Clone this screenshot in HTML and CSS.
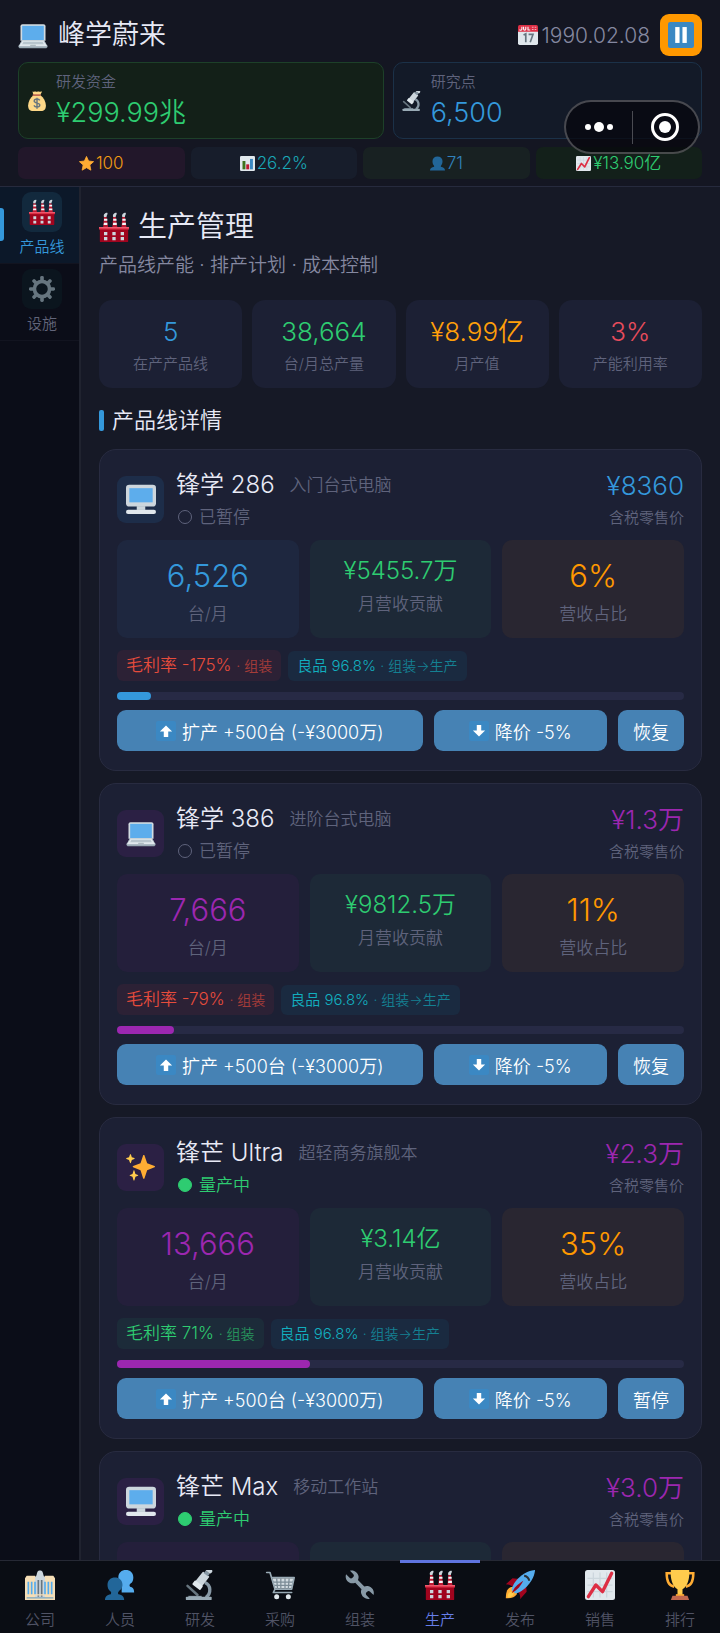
FILE: index.html
```
<!DOCTYPE html>
<html lang="zh-CN">
<head>
    <meta charset="UTF-8">
    <meta name="viewport" content="width=device-width, initial-scale=1.0">
    <title>峰学蔚来</title>
    <link rel="stylesheet" href="styles.css">
</head>
<body>
    <!-- icon sprite -->
    <svg class="sprite" aria-hidden="true">
        <symbol id="i-laptop" viewBox="0 0 36 36">
            <path fill="#ccd6dd" d="M34 29.100c0 1.200-1 1.900-2 1.900H4c-1 0-2-.700-2-1.900L5 24h26z"/>
            <path fill="#9aaab4" d="M.700 32.500c-.600-1.200 0-2 .900-2.500L5 24h26l3.500 6c.900.500 1.400 1.300.800 2.500-.300.600-1 1.500-1.800 1.500h-31c-.800 0-1.500-.900-1.800-1.500z"/>
            <path fill="#e1e8ed" d="M1 31.500L5.500 25h25l4.500 6.500z"/>
            <path fill="#b8c5cd" d="M6.500 26h23l1.500 3H5z"/>
            <path fill="#aebbc1" d="M15 29.800h6l.700 1.700h-7.400z"/>
            <path fill="#d2dbe1" d="M3 7.500C3 6 4 5 5.500 5h25C32 5 33 6 33 7.500V25H3z"/>
            <path fill="#5dadec" d="M5 7h26v17H5z"/>
        </symbol>
        <symbol id="i-desktop" viewBox="0 0 36 36">
            <rect fill="#99aab5" x="13" y="25" width="10" height="7"/>
            <rect fill="#ccd6dd" y="1" width="36" height="26" rx="4"/>
            <path fill="#5dadec" d="M4 5h28v17H4z"/>
            <rect fill="#e1e8ed" y="31" width="36" height="5" rx="2.500"/>
            <path fill="#ccd6dd" d="M13 27h10v4H13z"/>
        </symbol>
        <symbol id="i-sparkles" viewBox="0 0 36 36">
            <path fill="#ffac33" d="M34.300 16.900l-8.900-3.300L22.100 4c-.100-.600-1.300-.600-1.500 0l-3.200 9.600-8.900 3.300c-.600.200-.600 1.300 0 1.500l8.900 3.400 3.200 9.900c.200.600 1.400.600 1.500 0l3.300-9.900 8.900-3.400c.600-.200.600-1.300 0-1.500z"/>
            <path fill="#ffcc4d" d="M14.300 27.500l-3-1.100-1.200-4c-.100-.500-1-.500-1.100 0l-1.200 4-3 1.100c-.500.200-.500.900 0 1.100l3 1.200 1.200 4c.100.500 1 .500 1.100 0l1.200-4 3-1.200c.500-.200.500-.900 0-1.100zM10 7.300L7 6.200 5.900 3c-.100-.500-1-.500-1.100 0L3.600 6.200l-3 1.100c-.500.200-.500.900 0 1.100l3 1.200L4.800 13c.100.500 1 .500 1.100 0L7 9.600l3-1.200c.500-.200.500-.900 0-1.100z"/>
        </symbol>
        <symbol id="i-factory" viewBox="0 0 36 36">
            <path fill="#be1931" d="M5 18l1-12h3l2 12zM16 18l1-12h3l2 12zM27 18l1-12h3l2 12z"/>
            <path fill="#f4f7f9" d="M6 8h4v2.500H6zM6 13h4v2.500H5.500zM17 8h4v2.500h-4zM17 13h4.300v2.500h-4.600zM28 8h4v2.500h-4zM28 13h4.300v2.500h-4.600z"/>
            <path fill="#ccd6dd" d="M6 6C5 3 7 1 10 1c1 2-1 3-1 5zM17 6c-1-3 1-5 4-5 1 2-1 3-1 5zM28 6c-1-3 1-5 4-5 1 2-1 3-1 5z"/>
            <path fill="#a0041e" d="M1 19h34v16a1 1 0 0 1-1 1H2a1 1 0 0 1-1-1z"/>
            <rect fill="#dd2e44" y="18" width="36" height="3"/>
            <path fill="#ea596e" d="M0 18h36v1.500H0z"/>
            <path fill="#ccd6dd" d="M6 24h4v4H6zM16 24h4v4h-4zM26 24h4v4h-4zM6 30h4v4H6zM16 30h4v4h-4zM26 30h4v4h-4z"/>
        </symbol>
        <symbol id="i-gear" viewBox="0 0 36 36">
            <g fill="#66757f">
                <g id="teeth">
                    <rect x="15.500" y="0" width="5" height="36" rx="2"/>
                    <rect x="0" y="15.500" width="36" height="5" rx="2"/>
                </g>
                <use href="#teeth" transform="rotate(45 18 18)"/>
                <circle cx="18" cy="18" r="13"/>
            </g>
            <circle class="gear-hole" cx="18" cy="18" r="8"/>
        </symbol>
        <symbol id="i-money" viewBox="0 0 36 36">
            <path fill="#fdd888" d="M12 7C6 12 2 19 2 26c0 7 3 10 9 10h14c6 0 9-3 9-10 0-7-4-14-10-19z"/>
            <path fill="#fdd888" d="M10 1c2 1 3-1 5 0s4-1 6 0 4-1 6 0c-1 3-2 4-3 6H12c-1-2-2-4-2-6z"/>
            <rect fill="#bf6952" x="10" y="6" width="15" height="3" rx="1.500"/>
            <path fill="none" stroke="#67757f" stroke-width="2.600" d="M23 17c-1-2-3-2.500-5-2.500-3 0-5 1.300-5 3.700C13 23 23 20.500 23 25.300c0 2.500-2.500 3.700-5 3.700-2.500 0-4.500-1-5.500-3M18 12v20"/>
        </symbol>
        <symbol id="i-microscope" viewBox="0 0 36 36">
            <path fill="none" stroke="#67757f" stroke-width="3" stroke-linecap="round" d="M3 19l12 11"/>
            <path fill="none" stroke="#8899a6" stroke-width="4" d="M24 15c7 3 8 13 1 18"/>
            <path fill="#8899a6" d="M4 31h16v3H4z"/>
            <rect fill="#99aab5" x="1" y="32" width="31" height="4" rx="1"/>
            <g transform="rotate(38 20 12)">
                <rect fill="#ccd6dd" x="15" y="3" width="10" height="16" rx="1"/>
                <rect fill="#8899a6" x="17" y="0" width="6" height="4"/>
                <rect fill="#ccd6dd" x="16" y="-5" width="8" height="5" rx="2"/>
                <rect fill="#e1e8ed" x="14" y="17" width="12" height="6" rx="1"/>
            </g>
        </symbol>
        <symbol id="i-calendar" viewBox="0 0 36 36">
            <path fill="#e0e7ec" d="M0 9h36v24a3 3 0 0 1-3 3H3a3 3 0 0 1-3-3z"/>
            <path fill="#dd2f45" d="M3 0h30a3 3 0 0 1 3 3v9H0V3a3 3 0 0 1 3-3z"/>
            <path fill="none" stroke="#f5f8fa" stroke-width="2" d="M7 3v4c0 3-4 3-4 1M10 3v4c0 3 4 3 4 0V3M18 3v6h4"/>
            <path fill="#f4abba" d="M25 3h3v2h-3zM30 3h3v2h-3zM25 7h3v2h-3zM30 7h3v2h-3z"/>
            <path fill="none" stroke="#66757f" stroke-width="3" d="M10 18l4-2v15M19 17h8l-5 14"/>
        </symbol>
        <symbol id="i-pause" viewBox="0 0 36 36">
            <rect fill="#3b88c3" width="36" height="36" rx="3"/>
            <rect fill="#fff" x="10" y="7" width="6" height="22"/>
            <rect fill="#fff" x="20" y="7" width="6" height="22"/>
        </symbol>
        <symbol id="i-star" viewBox="0 0 36 36">
            <path fill="#ffac33" stroke="#ffac33" stroke-width="2" stroke-linejoin="round" d="M18 1l5 11 12 1.500-9 8 2.500 12.500L18 28 7.500 34 10 21.500l-9-8L13 12z"/>
        </symbol>
        <symbol id="i-bars" viewBox="0 0 36 36">
            <rect fill="#e1e8ed" width="36" height="36" rx="3"/>
            <path fill="#3e721d" d="M6 12h7v20H6z"/>
            <path fill="#be1931" d="M15 20h7v12h-7z"/>
            <path fill="#3b88c3" d="M24 7h7v25h-7z"/>
        </symbol>
        <symbol id="i-person" viewBox="0 0 36 36">
            <path fill="#226699" d="M26 26c0-2 0-3 1-4 2-2 3-5 3-10 0-7-5-11-12-11S6 5 6 12c0 5 1 8 3 10 1 1 1 2 1 4-6 1-10 4-10 9h36c0-5-4-8-10-9z"/>
        </symbol>
        <symbol id="i-people" viewBox="0 0 36 36">
            <path fill="#55acee" d="M30 20c-1-2-1-2 1-4 2-1 3-4 3-7 0-6-4-9-9-9s-9 3-9 9c0 3 1 6 3 8 1 1 1 1 1 3v7h15c0-4-1-6-5-7z"/>
            <path fill="#226699" d="M16 29c-1-2 0-2 1-4 2-1 4-4 4-7 0-6-4-9-9-9s-9 3-9 9c0 3 1 6 4 8 1 1 0 2 0 3-5 1-7 3-7 7h23c0-4-2-6-7-7z"/>
        </symbol>
        <symbol id="i-chart" viewBox="0 0 36 36">
            <rect fill="#e1e8ed" width="36" height="36" rx="3"/>
            <path fill="none" stroke="#ccd6dd" stroke-width="1.500" d="M3 10h30M3 18h30M3 26h30M10 3v30M18 3v30M26 3v30"/>
            <path fill="none" stroke="#dd2e44" stroke-width="4" stroke-linecap="round" stroke-linejoin="round" d="M4 32l9-14 8 8L32 4"/>
        </symbol>
        <symbol id="i-office" viewBox="0 0 36 36">
            <path fill="#f5deb6" d="M0 10l2-3h10l2 3v26H0zM22 10l2-3h10l2 3v26H22z"/>
            <path fill="#ccd6dd" d="M12 9c2-1 2-5 3-7 1-2 5-2 6 0 1 2 1 6 3 7v27H12z"/>
            <path fill="#55acee" d="M3 14h2v16H3zM7 14h2v16H7zM11 14h2v16h-2zM23 14h2v16h-2zM27 14h2v16h-2zM31 14h2v16h-2z"/>
            <path fill="#67757f" d="M15 12h2v20h-2zM19 12h2v20h-2z"/>
            <path fill="#f5deb6" d="M0 29h36v1.500H0zM0 33h36v3H0z"/>
            <path fill="#3b88c3" d="M2 33h32v1H2z"/>
        </symbol>
        <symbol id="i-cart" viewBox="0 0 36 36">
            <path fill="#d3dce2" d="M9 10h25l-2 12H12z"/>
            <path fill="none" stroke="#7b8b96" stroke-width="1.500" d="M9 14.500h25M10 18.500h23M14 10l1 12M19 10v12M24 10v12M29 10l-1 12"/>
            <path fill="none" stroke="#99aab5" stroke-width="2" stroke-linecap="round" stroke-linejoin="round" d="M2 3h4l6 20-2 4h22M8 9h27l-3 14H12"/>
            <circle fill="#e1e8ed" cx="14" cy="32" r="3"/>
            <circle fill="#e1e8ed" cx="28" cy="32" r="3"/>
        </symbol>
        <symbol id="i-wrench" viewBox="0 0 36 36">
            <path fill="#8899a6" d="M27.500 19.200c-1.500-.300-3 0-4.300.700L15.500 12c.700-1.500 1-3 .700-4.700C15.500 3.500 12 .500 8 .500c-.700 0-1.300.100-2 .300l4 4.200c1 1 .800 2.500-.200 3.500L9 9.300c-1 1-2.500 1-3.500.100L1.300 5.200C0 9 1.500 13 5 15c2.300 1.300 5 1.300 7.300.300l7.500 7.700c-.800 2-.900 4 0 6.200 1.400 4 5.800 6.500 10 5.300l-4-4.200c-1-1-1-2.500 0-3.500l.800-.800c1-1 2.500-1 3.500 0l4.200 4.100c1.500-4.800-1.600-10-6.800-10.900z"/>
        </symbol>
        <symbol id="i-rocket" viewBox="0 0 36 36">
            <path fill="#a0041e" d="M1 17l8-7 11 1-9 11c-2-3-6-5-10-5zM18 35l8-9-1-11-11 10c3 2 5 6 4 10z"/>
            <path fill="#ffac33" d="M1 34c0-6 1-11 5-13 6-2 10 3 8 8-2 4-7 5-13 5z"/>
            <path fill="#ffcc4d" d="M3 33c0-3 1-6 4-7 3 0 4 2 3 4-2 2-4 3-7 3z"/>
            <path fill="#55acee" d="M36 0S26 0 16 10C11 15 8 21 8 24l4 4c3 0 9-3 14-8C36 10 36 0 36 0z"/>
            <path fill="#a0041e" d="M8 28c3-7 6-10 14-15-3 6-7 11-14 15z"/>
            <path fill="none" stroke="#292f33" stroke-width="2.500" d="M23 7c3 0 6 3 6 6"/>
        </symbol>
        <symbol id="i-trophy" viewBox="0 0 36 36">
            <path fill="none" stroke="#ffac33" stroke-width="3" d="M9 4H2c0 9 2 15 9 16M27 4h7c0 9-2 15-9 16"/>
            <path fill="#ffcc4d" d="M7 0h22c1 10-2 20-8 23v8h-6v-8C9 20 6 10 7 0z"/>
            <path fill="#ffac33" d="M13 29h10v3H13z"/>
            <path fill="#c1694f" d="M9 31h18l2 5H7z"/>
        </symbol>
        <symbol id="i-up" viewBox="0 0 36 36">
            <rect fill="#3b88c3" width="36" height="36" rx="4"/>
            <path fill="#fff" d="M18 8l11 11h-7v10h-8V19H7z"/>
        </symbol>
        <symbol id="i-down" viewBox="0 0 36 36">
            <rect fill="#3b88c3" width="36" height="36" rx="4"/>
            <path fill="#fff" d="M18 28L7 17h7V7h8v10h7z"/>
        </symbol>
    </svg>

    <div class="app">
        <header class="topbar">
            <div class="title-row">
                <svg class="ico ico-lg"><use href="#i-laptop"/></svg>
                <h1>峰学蔚来</h1>
                <div class="date">
                    <svg class="ico ico-sm"><use href="#i-calendar"/></svg>
                    <span>1990.02.08</span>
                </div>
                <button class="pause-btn" type="button" aria-label="暂停"><svg class="ico ico-md"><use href="#i-pause"/></svg></button>
            </div>
            <div class="funds">
                <div class="fund money">
                    <svg class="ico ico-sm"><use href="#i-money"/></svg>
                    <div>
                        <div class="fund-label">研发资金</div>
                        <div class="fund-value">¥299.99兆</div>
                    </div>
                </div>
                <div class="fund research">
                    <svg class="ico ico-sm"><use href="#i-microscope"/></svg>
                    <div>
                        <div class="fund-label">研究点</div>
                        <div class="fund-value">6,500</div>
                    </div>
                </div>
            </div>
            <div class="chips">
                <div class="chip chip-star"><svg class="ico ico-xs"><use href="#i-star"/></svg>100</div>
                <div class="chip chip-share"><svg class="ico ico-xs"><use href="#i-bars"/></svg>26.2%</div>
                <div class="chip chip-staff"><svg class="ico ico-xs"><use href="#i-person"/></svg>71</div>
                <div class="chip chip-income"><svg class="ico ico-xs"><use href="#i-chart"/></svg>¥13.90亿</div>
            </div>
            <div class="capsule">
                <button type="button" aria-label="更多">
                    <svg width="30" height="12" viewBox="0 0 30 12"><g fill="#fff"><circle cx="4" cy="6" r="3"/><circle cx="15" cy="6" r="5"/><circle cx="26" cy="6" r="3"/></g></svg>
                </button>
                <button type="button" aria-label="关闭">
                    <svg width="28" height="28" viewBox="0 0 28 28"><circle cx="14" cy="14" r="12.500" fill="none" stroke="#fff" stroke-width="3"/><circle cx="14" cy="14" r="6" fill="#fff"/></svg>
                </button>
            </div>
        </header>

        <div class="body">
            <nav class="side">
                <a class="side-item active" href="#lines">
                    <span class="side-icon"><svg class="ico ico-md"><use href="#i-factory"/></svg></span>
                    产品线
                </a>
                <a class="side-item" href="#facility">
                    <span class="side-icon"><svg class="ico ico-md"><use href="#i-gear"/></svg></span>
                    设施
                </a>
            </nav>

            <main class="content" id="lines">
                <h2 class="page-title"><svg class="ico ico-lg"><use href="#i-factory"/></svg>生产管理</h2>
                <p class="subtitle">产品线产能 · 排产计划 · 成本控制</p>

                <div class="stats">
                    <div class="stat"><div class="stat-value blue">5</div><div class="stat-label">在产产品线</div></div>
                    <div class="stat"><div class="stat-value green">38,664</div><div class="stat-label">台/月总产量</div></div>
                    <div class="stat"><div class="stat-value orange">¥8.99亿</div><div class="stat-label">月产值</div></div>
                    <div class="stat"><div class="stat-value red">3%</div><div class="stat-label">产能利用率</div></div>
                </div>

                <h3 class="section-title">产品线详情</h3>

                <section class="product theme-blue">
                    <div class="product-head">
                        <span class="product-icon"><svg class="ico ico-lg"><use href="#i-desktop"/></svg></span>
                        <div class="product-info">
                            <div class="name">锋学 286<small>入门台式电脑</small></div>
                            <div class="status">已暂停</div>
                        </div>
                        <div class="price">
                            <div class="price-value">¥8360</div>
                            <div class="price-note">含税零售价</div>
                        </div>
                    </div>
                    <div class="metrics">
                        <div class="metric output"><b>6,526</b><span>台/月</span></div>
                        <div class="metric revenue"><b>¥5455.7万</b><span>月营收贡献</span></div>
                        <div class="metric share"><b>6%</b><span>营收占比</span></div>
                    </div>
                    <div class="tags">
                        <span class="tag loss">毛利率 -175% <small>· 组装</small></span>
                        <span class="tag quality">良品 96.8% <small>· 组装→生产</small></span>
                    </div>
                    <div class="progress"><div class="bar" style="width: 6%"></div></div>
                    <div class="actions">
                        <button type="button"><svg class="ico ico-sm"><use href="#i-up"/></svg>扩产 +500台 (-¥3000万)</button>
                        <button type="button"><svg class="ico ico-sm"><use href="#i-down"/></svg>降价 -5%</button>
                        <button type="button">恢复</button>
                    </div>
                </section>

                <section class="product theme-purple">
                    <div class="product-head">
                        <span class="product-icon"><svg class="ico ico-lg"><use href="#i-laptop"/></svg></span>
                        <div class="product-info">
                            <div class="name">锋学 386<small>进阶台式电脑</small></div>
                            <div class="status">已暂停</div>
                        </div>
                        <div class="price">
                            <div class="price-value">¥1.3万</div>
                            <div class="price-note">含税零售价</div>
                        </div>
                    </div>
                    <div class="metrics">
                        <div class="metric output"><b>7,666</b><span>台/月</span></div>
                        <div class="metric revenue"><b>¥9812.5万</b><span>月营收贡献</span></div>
                        <div class="metric share"><b>11%</b><span>营收占比</span></div>
                    </div>
                    <div class="tags">
                        <span class="tag loss">毛利率 -79% <small>· 组装</small></span>
                        <span class="tag quality">良品 96.8% <small>· 组装→生产</small></span>
                    </div>
                    <div class="progress"><div class="bar" style="width: 10%"></div></div>
                    <div class="actions">
                        <button type="button"><svg class="ico ico-sm"><use href="#i-up"/></svg>扩产 +500台 (-¥3000万)</button>
                        <button type="button"><svg class="ico ico-sm"><use href="#i-down"/></svg>降价 -5%</button>
                        <button type="button">恢复</button>
                    </div>
                </section>

                <section class="product theme-purple running">
                    <div class="product-head">
                        <span class="product-icon"><svg class="ico ico-lg"><use href="#i-sparkles"/></svg></span>
                        <div class="product-info">
                            <div class="name">锋芒 Ultra<small>超轻商务旗舰本</small></div>
                            <div class="status">量产中</div>
                        </div>
                        <div class="price">
                            <div class="price-value">¥2.3万</div>
                            <div class="price-note">含税零售价</div>
                        </div>
                    </div>
                    <div class="metrics">
                        <div class="metric output"><b>13,666</b><span>台/月</span></div>
                        <div class="metric revenue"><b>¥3.14亿</b><span>月营收贡献</span></div>
                        <div class="metric share"><b>35%</b><span>营收占比</span></div>
                    </div>
                    <div class="tags">
                        <span class="tag profit">毛利率 71% <small>· 组装</small></span>
                        <span class="tag quality">良品 96.8% <small>· 组装→生产</small></span>
                    </div>
                    <div class="progress"><div class="bar" style="width: 34%"></div></div>
                    <div class="actions">
                        <button type="button"><svg class="ico ico-sm"><use href="#i-up"/></svg>扩产 +500台 (-¥3000万)</button>
                        <button type="button"><svg class="ico ico-sm"><use href="#i-down"/></svg>降价 -5%</button>
                        <button type="button">暂停</button>
                    </div>
                </section>

                <section class="product theme-purple running">
                    <div class="product-head">
                        <span class="product-icon"><svg class="ico ico-lg"><use href="#i-desktop"/></svg></span>
                        <div class="product-info">
                            <div class="name">锋芒 Max<small>移动工作站</small></div>
                            <div class="status">量产中</div>
                        </div>
                        <div class="price">
                            <div class="price-value">¥3.0万</div>
                            <div class="price-note">含税零售价</div>
                        </div>
                    </div>
                    <div class="metrics">
                        <div class="metric output"></div>
                        <div class="metric revenue"></div>
                        <div class="metric share"></div>
                    </div>
                </section>
            </main>
        </div>

        <nav class="tabbar">
            <a href="#company"><svg class="ico ico-lg"><use href="#i-office"/></svg>公司</a>
            <a href="#people"><svg class="ico ico-lg"><use href="#i-people"/></svg>人员</a>
            <a href="#research"><svg class="ico ico-lg"><use href="#i-microscope"/></svg>研发</a>
            <a href="#purchase"><svg class="ico ico-lg"><use href="#i-cart"/></svg>采购</a>
            <a href="#assembly"><svg class="ico ico-lg"><use href="#i-wrench"/></svg>组装</a>
            <a class="active" href="#production"><svg class="ico ico-lg"><use href="#i-factory"/></svg>生产</a>
            <a href="#release"><svg class="ico ico-lg"><use href="#i-rocket"/></svg>发布</a>
            <a href="#sales"><svg class="ico ico-lg"><use href="#i-chart"/></svg>销售</a>
            <a href="#ranking"><svg class="ico ico-lg"><use href="#i-trophy"/></svg>排行</a>
        </nav>
    </div>
</body>
</html>
```
FILE: styles.css
```
* {
    box-sizing: border-box;
}

body {
    margin: 0;
    background: #161926;
    color: #e8eaf6;
    font-family: Inter, "Noto Sans CJK SC", sans-serif;
    font-weight: 350;
}

h1, h2, h3, p {
    margin: 0;
    font-weight: 350;
}

a {
    color: inherit;
    text-decoration: none;
}

button {
    padding: 0;
    border: none;
    font: inherit;
    color: #fff;
    cursor: pointer;
}

.sprite {
    display: none;
}

.ico {
    flex: none;
    overflow: visible;
}

.ico-xs { width: 15px; height: 15px; }
.ico-sm { width: 20px; height: 20px; }
.ico-md { width: 26px; height: 26px; }
.ico-lg { width: 30px; height: 30px; }

.blue { color: #3498db; }
.green { color: #2ecc71; }
.orange { color: #ff9f0a; }
.red { color: #e74c5c; }

.app {
    display: flex;
    flex-direction: column;
    height: 100vh;
}

/* top bar */
.topbar {
    position: relative;
    flex: none;
    padding: 14px 18px 7px;
    background: #141622;
    border-bottom: 1px solid #262a3d;
}

.title-row {
    display: flex;
    align-items: center;
    gap: 10px;
    height: 42px;
}

.title-row h1 {
    flex: 1;
    font-size: 27px;
    line-height: 44px;
}

.date {
    display: flex;
    align-items: center;
    gap: 4px;
    color: #8588a0;
    font-size: 21px;
}

.pause-btn {
    display: grid;
    place-items: center;
    width: 42px;
    height: 42px;
    border-radius: 9px;
    background: #ff9800;
}

.funds {
    display: grid;
    grid-template-columns: 13fr 11fr;
    gap: 9px;
    margin-top: 6px;
}

.fund {
    display: flex;
    align-items: center;
    gap: 9px;
    height: 77px;
    padding: 0 8px;
    border: 1px solid;
    border-radius: 10px;
}

.fund-label {
    color: #5f637c;
    font-size: 15px;
    line-height: 24px;
}

.fund-value {
    font-size: 27px;
    line-height: 38px;
}

.money {
    background: #132018;
    border-color: #1d4029;
}

.money .fund-value {
    color: #2ecc71;
}

.research {
    background: #131a28;
    border-color: #1b3148;
}

.research .fund-value {
    color: #3498db;
}

.chips {
    display: grid;
    grid-template-columns: repeat(4, 1fr);
    gap: 6px;
    margin-top: 8px;
}

.chip {
    display: flex;
    align-items: center;
    justify-content: center;
    gap: 2px;
    height: 32px;
    border-radius: 7px;
    font-size: 17px;
    line-height: 24px;
}

.chip-star { background: #22172a; color: #f39c12; }
.chip-share { background: #171d2b; color: #1aa9b8; }
.chip-staff { background: #182122; color: #3181bc; }
.chip-income { background: #13201a; color: #2ecc71; }

.capsule {
    position: absolute;
    top: 100px;
    right: 20px;
    display: flex;
    align-items: center;
    width: 136px;
    height: 54px;
    border: 2px solid rgba(255, 255, 255, 0.25);
    border-radius: 27px;
    background: rgba(5, 6, 12, 0.7);
}

.capsule button {
    display: grid;
    flex: 1;
    place-items: center;
    height: 33px;
    background: none;
}

.capsule button + button {
    border-left: 1px solid #4a4b52;
}

/* side menu */
.body {
    display: flex;
    flex: 1;
    min-height: 0;
}

.side {
    flex: none;
    width: 81px;
    background: #0b0d18;
    border-right: 2px solid #20232f;
}

.side-item {
    position: relative;
    display: flex;
    flex-direction: column;
    align-items: center;
    gap: 3px;
    height: 77px;
    padding: 5px 0 0 5px;
    border-bottom: 1px solid #121420;
    color: #62657a;
    font-size: 15px;
    line-height: 24px;
}

.side-icon {
    display: grid;
    place-items: center;
    width: 40px;
    height: 40px;
    border-radius: 9px;
    background: #0b151e;
}

.gear-hole {
    fill: #0b151e;
}

.side-item.active {
    background: #0c1829;
    color: #3498db;
}

.side-item.active .side-icon {
    background: #12293d;
}

.side-item.active::before {
    content: "";
    position: absolute;
    left: 0;
    top: 21px;
    width: 4px;
    height: 33px;
    border-radius: 0 3px 3px 0;
    background: #3498db;
}

/* content */
.content {
    flex: 1;
    min-width: 0;
    overflow: hidden;
    padding: 18px 18px 0;
}

.page-title {
    display: flex;
    align-items: center;
    gap: 9px;
    font-size: 29px;
    line-height: 43px;
}

.subtitle {
    color: #8588a0;
    font-size: 19px;
    line-height: 36px;
}

.stats {
    display: grid;
    grid-template-columns: repeat(4, 1fr);
    gap: 10px;
    margin-top: 16px;
}

.stat {
    height: 88px;
    padding-top: 13px;
    border-radius: 13px;
    background: #1c2034;
    text-align: center;
}

.stat-value {
    font-size: 26px;
    line-height: 38px;
}

.stat-label {
    color: #5f637c;
    font-size: 15px;
    line-height: 26px;
}

.section-title {
    display: flex;
    align-items: center;
    gap: 8px;
    margin: 15px 0 12px;
    font-size: 22px;
    line-height: 34px;
}

.section-title::before {
    content: "";
    width: 5px;
    height: 21px;
    border-radius: 2px;
    background: #3498db;
}

/* product card */
.product {
    height: 322px;
    margin-bottom: 12px;
    padding: 17px 17px 0;
    border: 1px solid #282b40;
    border-radius: 17px;
    background: #1c2034;
}

.theme-blue { --main: #3498db; --soft: #1e273f; --tile: #1d2d49; }
.theme-purple { --main: #9c27b0; --soft: #241f3b; --tile: #2b2044; }

.product-head {
    display: flex;
    align-items: center;
    gap: 12px;
    height: 64px;
}

.product-icon {
    display: grid;
    place-items: center;
    width: 47px;
    height: 47px;
    border-radius: 9px;
    background: var(--tile);
}

.product-info {
    flex: 1;
}

.name {
    font-size: 24px;
    line-height: 36px;
}

.name small {
    margin-left: 15px;
    color: #5f637c;
    font-size: 17px;
    vertical-align: 2px;
}

.status {
    display: flex;
    align-items: center;
    gap: 7px;
    padding-left: 2px;
    color: #5f637c;
    font-size: 17px;
    line-height: 28px;
}

.status::before {
    content: "";
    width: 12px;
    height: 12px;
    border: 1px solid #5f637c;
    border-radius: 50%;
}

.running .status {
    color: #2ecc71;
}

.running .status::before {
    border-color: #2ecc71;
    background: #2ecc71;
}

.price {
    text-align: right;
}

.price-value {
    color: var(--main);
    font-size: 26px;
    line-height: 38px;
}

.price-note {
    color: #5f637c;
    font-size: 15px;
    line-height: 26px;
}

.metrics {
    display: grid;
    grid-template-columns: repeat(3, 1fr);
    gap: 11px;
    margin-top: 9px;
}

.metric {
    display: flex;
    flex-direction: column;
    align-items: center;
    height: 98px;
    padding-top: 14px;
    border-radius: 10px;
    background: var(--soft);
}

.metric b {
    color: var(--main);
    font-size: 31px;
    font-weight: 350;
    line-height: 44px;
}

.metric span {
    color: #5f637c;
    font-size: 17px;
    line-height: 32px;
}

.metric.revenue {
    background: #1d2937;
}

.metric.revenue b {
    color: #2ecc71;
    font-size: 24px;
    line-height: 34px;
}

.metric.share {
    background: #292631;
}

.metric.share b {
    color: #ff9800;
}

.tags {
    display: flex;
    align-items: center;
    gap: 7px;
    margin-top: 12px;
}

.tag {
    padding: 0 9px;
    border-radius: 6px;
    font-size: 17px;
    line-height: 31px;
}

.tag small {
    font-size: 14px;
    opacity: 0.65;
}

.loss { background: #2c2135; color: #e74c3c; }
.profit { background: #1c2b39; color: #2ecc71; }

.quality {
    background: #1a2a40;
    color: #12aebf;
    font-size: 15px;
    line-height: 30px;
}

.progress {
    height: 8px;
    margin-top: 11px;
    border-radius: 4px;
    background: #272a45;
}

.bar {
    height: 8px;
    border-radius: 4px;
    background: var(--main);
}

.actions {
    display: grid;
    grid-template-columns: 305fr 173fr 66fr;
    gap: 11px;
    margin-top: 10px;
}

.actions button {
    display: flex;
    align-items: center;
    justify-content: center;
    gap: 6px;
    height: 41px;
    border-radius: 9px;
    background: #4682b4;
    font-size: 18px;
    white-space: nowrap;
}

/* bottom tabs */
.tabbar {
    display: grid;
    flex: none;
    grid-template-columns: repeat(9, 1fr);
    height: 73px;
    border-top: 1px solid #262935;
    background: #0a0d14;
}

.tabbar a {
    position: relative;
    display: flex;
    flex-direction: column;
    align-items: center;
    gap: 8px;
    padding-top: 9px;
    color: #505365;
    font-size: 15px;
    line-height: 24px;
}

.tabbar a.active {
    color: #667eea;
}

.tabbar a.active::before {
    content: "";
    position: absolute;
    top: -1px;
    left: 0;
    right: 0;
    height: 3px;
    background: #5f74e0;
}
```
